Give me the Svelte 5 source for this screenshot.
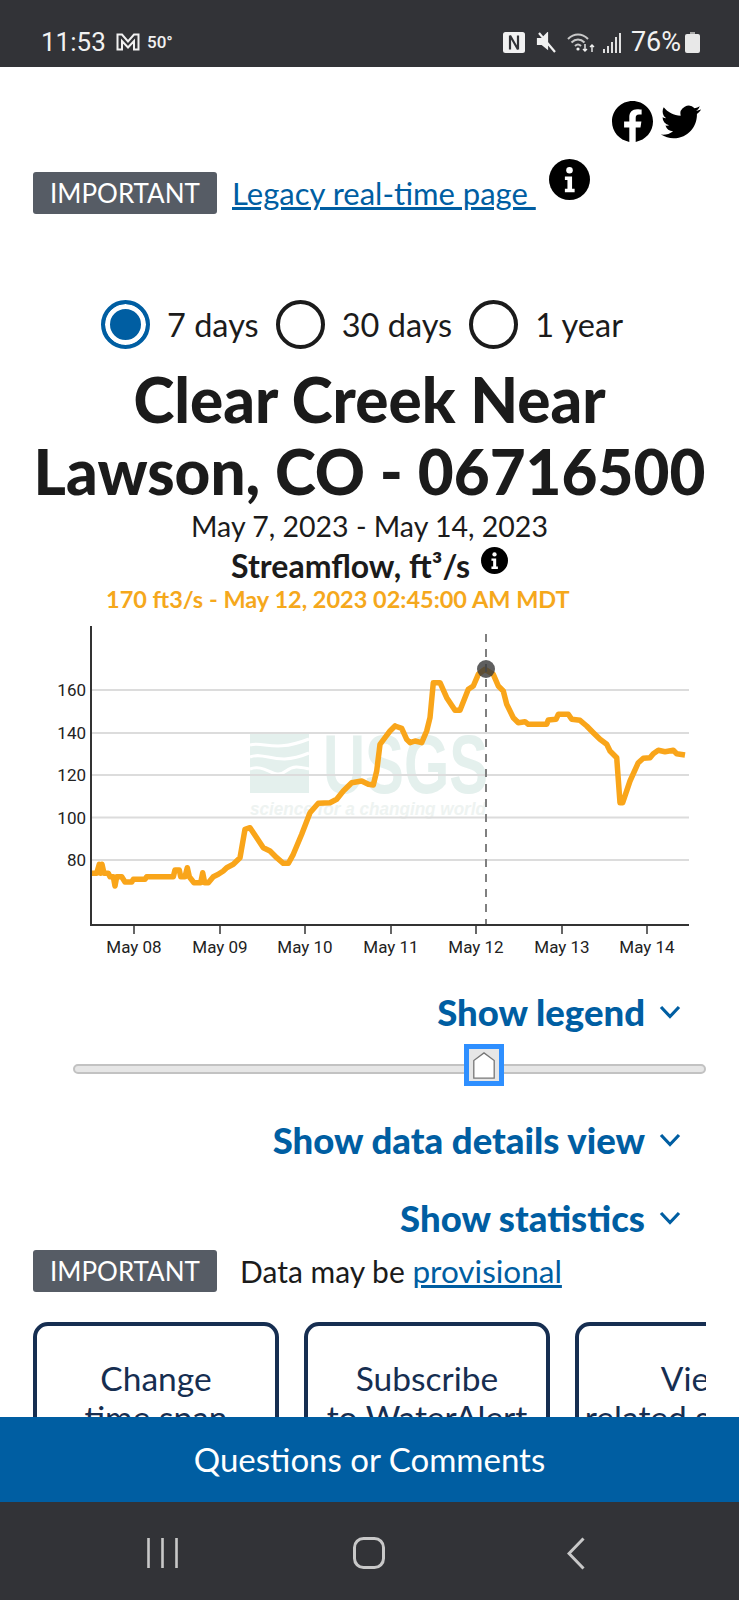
<script lang="ts">
  // traced from the plot: [x, y] in page pixels, left half then right half
  const rawLeft = [[93,787],[110,787],[118,760],[122,787],[126,760],[132,787],[145,787],[150,797],[160,797],[165,825],[170,797],[185,797],[195,813],[215,813],[220,805],[255,805],[260,797],[340,797],[345,777],[358,777],[362,797],[375,797],[382,770],[388,797],[402,815],[422,815],[428,785],[434,815],[445,815],[460,797],[475,790],[490,780],[500,770],[520,760],[540,740],[555,655],[570,650],[590,680],[610,710],[630,720],[650,740],[670,757],[685,757],[700,730],[725,670],[750,605],[775,577],[810,575],[830,565],[850,540],[875,515],[905,510],[925,520],[940,522],[950,480],[960,400],[975,380],[990,360],[1005,345]]
  const rawRight = [[0,360],[15,345],[35,352],[50,385],[60,395],[75,390],[95,395],[110,360],[120,320],[130,215],[150,215],[170,260],[195,298],[210,298],[235,235],[250,225],[265,190],[285,175],[310,190],[325,225],[340,240],[350,280],[370,320],[385,335],[405,332],[415,340],[470,340],[475,327],[498,325],[505,310],[535,310],[545,325],[570,328],[590,345],[610,365],[630,385],[650,400],[660,420],[680,440],[690,575],[698,575],[720,510],[745,455],[760,442],[780,440],[790,428],[805,418],[825,422],[850,418],[860,428],[885,432]]

  const top = 620
  const series = [
    ...rawLeft.map(([x, y]) => [60 + x / 3, 610 + y / 3 - top]),
    ...rawRight.map(([x, y]) => [390 + x / 3, 610 + y / 3 - top])
  ].map(p => p[0].toFixed(1) + ',' + p[1].toFixed(1)).join(' ')

  const yTicks = [[160, 689], [140, 732], [120, 774], [100, 816.5], [80, 859]]
  const xTicks = [['May 08', 134], ['May 09', 220], ['May 10', 305], ['May 11', 391], ['May 12', 476], ['May 13', 562], ['May 14', 647]]

  const ranges = [
    { label: '7 days', checked: true },
    { label: '30 days', checked: false },
    { label: '1 year', checked: false }
  ]
  const cards = [
    ['Change', 'time span'],
    ['Subscribe', 'to WaterAlert'],
    ['View', 'related stations']
  ]
</script>

{#snippet info(cls)}
  <svg class={cls} viewBox="0 0 40 40" aria-hidden="true">
    <circle cx="20" cy="20" r="20" fill="#000" />
    <circle cx="20" cy="11" r="3.2" fill="#fff" />
    <path d="M15.5 17h7v12h2.5v3.5H15.5V29H18v-8.500h-2.500z" fill="#fff" />
  </svg>
{/snippet}

{#snippet chevron()}
  <svg class="chev" viewBox="0 0 22 14" aria-hidden="true">
    <path d="M2 2l9 9.500L20 2" fill="none" stroke="#005ea2" stroke-width="3.200" />
  </svg>
{/snippet}

<div class="phone">
  <div class="status">
    <span class="time">11:53</span>
    <svg class="gmail" viewBox="0 0 24 18" aria-hidden="true">
      <path d="M1.500 16.500V1.500L6 1.500l6 7 6-7h4.500v15H18V8l-6 6.500L6 8v8.500z" fill="none" stroke="#f1f1f1" stroke-width="2" />
    </svg>
    <span class="temp">50°</span>
    <span class="grow"></span>
    <svg class="sicon nfc" viewBox="0 0 22 21" aria-hidden="true">
      <rect width="22" height="21" rx="2.500" fill="#f1f1f1" />
      <path d="M7 3.500v14M15 3.500v14M7 3.500l8 14" fill="none" stroke="#323337" stroke-width="2.200" />
    </svg>
    <svg class="sicon mute" viewBox="0 0 21 21" aria-hidden="true">
      <path d="M2 7h4l5-5v14l-5-4H2zM3 1l16 19" fill="#f1f1f1" stroke="#f1f1f1" stroke-width="2.200" />
    </svg>
    <svg class="sicon wifi" viewBox="0 0 29 21" aria-hidden="true">
      <path d="M1 7c6-6 14-6 20 0M4.500 10.500c4-4 9-4 13 0M8 14c2-2 4-2 6 0" fill="none" stroke="#c9c9c9" stroke-width="2" />
      <circle cx="11" cy="17" r="1.600" fill="#f1f1f1" />
      <path d="M18 12v7m-2-2l2 2 2-2M25 20v-7m-2 2l2-2 2 2" fill="none" stroke="#f1f1f1" stroke-width="1.400" />
    </svg>
    <svg class="sicon signal" viewBox="0 0 19 21" aria-hidden="true">
      <path d="M1 21v-4M5 21v-7M9 21v-11M13 21V5M17 21V1" stroke="#e0e0e0" stroke-width="2" />
    </svg>
    <span class="batt">76%</span>
    <svg class="sicon battery" viewBox="0 0 15 21" aria-hidden="true">
      <path d="M5 0h5v2H5z" fill="#a8a8a8" />
      <rect y="2" width="15" height="19" rx="2" fill="#e8e8e8" />
    </svg>
  </div>

  <main>
    <div class="social">
      <svg viewBox="0 0 24 24" class="fb" aria-label="Facebook">
        <path d="M24 12.073c0-6.627-5.373-12-12-12s-12 5.373-12 12c0 5.990 4.388 10.954 10.125 11.854v-8.385H7.078v-3.470h3.047V9.430c0-3.007 1.792-4.669 4.533-4.669 1.312 0 2.686.235 2.686.235v2.953H15.830c-1.491 0-1.956.925-1.956 1.874v2.250h3.328l-.532 3.470h-2.796v8.385C19.612 23.027 24 18.062 24 12.073z" />
      </svg>
      <svg viewBox="0 0 24 24" class="tw" aria-label="Twitter">
        <path d="M23.953 4.570a10 10 0 01-2.825.775 4.958 4.958 0 002.163-2.723c-.951.555-2.005.959-3.127 1.184a4.920 4.920 0 00-8.384 4.482C7.690 8.095 4.067 6.130 1.640 3.162a4.822 4.822 0 00-.666 2.475c0 1.710.870 3.213 2.188 4.096a4.904 4.904 0 01-2.228-.616v.060a4.923 4.923 0 003.946 4.827 4.996 4.996 0 01-2.212.085 4.936 4.936 0 004.604 3.417 9.867 9.867 0 01-6.102 2.105c-.390 0-.779-.023-1.170-.067a13.995 13.995 0 007.557 2.209c9.053 0 13.998-7.496 13.998-13.985 0-.210 0-.420-.015-.630A9.935 9.935 0 0024 4.590z" />
      </svg>
    </div>

    <div class="legacy">
      <span class="tag">IMPORTANT</span>
      <a href="#legacy" class="lnk">Legacy real-time page&nbsp;</a>
      {@render info('info-big')}
    </div>

    <div class="ranges">
      {#each ranges as r}
        <span class="radio" class:on={r.checked}></span>
        <span class="rlabel">{r.label}</span>
      {/each}
    </div>

    <h1>Clear Creek Near<br />Lawson, CO - 06716500</h1>
    <div class="dates">May 7, 2023 - May 14, 2023</div>
    <div class="param">Streamflow, ft³/s {@render info('info-small')}</div>
    <div class="hover">170 ft3/s - May 12, 2023 02:45:00 AM MDT</div>

    <svg class="chart" viewBox="0 0 739 345" aria-label="Streamflow chart">
      <g class="wm">
        <rect x="250" y="111" width="59" height="61" fill="#e4f0ed" />
        <path d="M250 124c14-4 24 8 59-6M250 136c16-6 26 10 59-4M250 148c16-6 24 12 36 2 8-6 14-4 23-2" fill="none" stroke="#fff" stroke-width="3" />
        <text x="323" y="172" font-size="84" textLength="165" lengthAdjust="spacingAndGlyphs" class="wm-big">USGS</text>
        <text x="250" y="194" font-size="18" textLength="236" lengthAdjust="spacingAndGlyphs" class="wm-small">science for a changing world</text>
      </g>
      {#each yTicks as [label, y]}
        <line x1="91" x2="689" y1={y - top} y2={y - top} stroke="#dcdcdc" stroke-width="2" />
        <text x="86" y={y - top + 6} text-anchor="end" class="tick">{label}</text>
      {/each}
      <polyline points={series} fill="none" stroke="#f9a51a" stroke-width="5.500" stroke-linejoin="round" />
      <line x1="486" x2="486" y1="13" y2="304" stroke="#808080" stroke-width="2" stroke-dasharray="8 7" />
      <circle cx="486" cy="48" r="9" fill="#3c3c3c" fill-opacity="0.82" />
      <path d="M91 5v299h598" fill="none" stroke="#333" stroke-width="2" />
      {#each xTicks as [label, x]}
        <line x1={x} x2={x} y1="304" y2="313" stroke="#333" stroke-width="1.500" />
        <text x={x} y="332" text-anchor="middle" class="tick">{label}</text>
      {/each}
    </svg>

    <div class="toggle first">Show legend {@render chevron()}</div>

    <div class="slider">
      <div class="track"></div>
      <div class="thumb">
        <svg viewBox="0 0 22 27" aria-hidden="true">
          <path d="M.8 26.200V8.500L11 .9l10.200 7.600v17.700z" fill="#fff" stroke="#777" stroke-width="1.300" />
        </svg>
      </div>
    </div>

    <div class="toggle second">Show data details view {@render chevron()}</div>
    <div class="toggle third">Show statistics {@render chevron()}</div>

    <div class="note">
      <span class="tag">IMPORTANT</span>
      <span class="note-text">Data may be <a href="#provisional" class="lnk">provisional</a></span>
    </div>

    <div class="cards">
      {#each cards as c}
        <div class="card">{c[0]}<br />{c[1]}</div>
      {/each}
    </div>
  </main>

  <div class="footer">Questions or Comments</div>

  <div class="nav">
    <svg class="nav-menu" viewBox="0 0 31 30" aria-hidden="true">
      <path d="M1.500 0v30M15.500 0v30M29.500 0v30" stroke="#c8c8c8" stroke-width="2.600" />
    </svg>
    <svg class="nav-home" viewBox="0 0 32 32" aria-hidden="true">
      <rect x="1.500" y="1.500" width="29" height="29" rx="9" fill="none" stroke="#c8c8c8" stroke-width="3" />
    </svg>
    <svg class="nav-back" viewBox="0 0 18 33" aria-hidden="true">
      <path d="M16.500 1.500L2 16.500l14.500 15" fill="none" stroke="#c8c8c8" stroke-width="3" />
    </svg>
  </div>
</div>

<style>
  :global(body) {
    margin: 0;
    background: #fff;
  }

  .phone {
    width: 739px;
    height: 1600px;
    overflow: hidden;
    display: flex;
    flex-direction: column;
    font-family: Lato, "Noto Sans", sans-serif;
    color: #1b1b1b;
  }

  .status {
    height: 67px;
    flex-shrink: 0;
    background: #323337;
    color: #f1f1f1;
    display: flex;
    align-items: center;
    padding: 17px 39px 0 41px;
    box-sizing: border-box;
    font-family: Roboto, sans-serif;
  }

  .time {
    font-size: 26px;
    width: 75px;
  }

  .gmail {
    width: 24px;
    height: 18px;
  }

  .temp {
    font-size: 17px;
    font-weight: 500;
    margin-left: 7px;
  }

  .grow {
    flex: 1;
  }

  .sicon {
    height: 21px;
    flex-shrink: 0;
  }

  .nfc { width: 22px; }
  .mute { width: 21px; margin-left: 11px; }
  .wifi { width: 29px; margin-left: 10px; }
  .signal { width: 19px; margin-left: 7px; }
  .battery { width: 15px; margin-left: 4px; }

  .batt {
    font-size: 27px;
    margin-left: 9px;
  }

  main {
    height: 1350px;
    flex-shrink: 0;
    overflow: hidden;
  }

  .social {
    display: flex;
    justify-content: flex-end;
    align-items: center;
    gap: 8px;
    padding: 34px 38px 0 0;
    height: 41px;
  }

  .fb { width: 41px; height: 41px; }
  .tw { width: 40px; height: 40px; }

  .legacy {
    display: flex;
    align-items: flex-start;
    margin-top: 17px;
    padding-left: 33px;
    height: 55px;
  }

  .tag {
    background: #565c65;
    color: #fff;
    border-radius: 3px;
    width: 184px;
    height: 42px;
    line-height: 42px;
    text-align: center;
    font-size: 26px;
    flex-shrink: 0;
  }

  .legacy .tag {
    margin-top: 13px;
  }

  .lnk {
    color: #005ea2;
  }

  .legacy .lnk {
    font-size: 31px;
    line-height: 42px;
    margin: 13px 13px 0 15px;
  }

  .info-big {
    width: 41px;
    height: 41px;
  }

  .ranges {
    display: flex;
    align-items: center;
    margin-top: 86px;
    padding-left: 101px;
    height: 49px;
  }

  .radio {
    width: 49px;
    height: 49px;
    box-sizing: border-box;
    border: 4px solid #1b1b1b;
    border-radius: 50%;
    background: #fff;
    flex-shrink: 0;
  }

  .radio.on {
    border-color: #005ea2;
    background: #005ea2;
    box-shadow: inset 0 0 0 5px #fff;
  }

  .rlabel {
    font-size: 32.500px;
    margin: 0 17px;
  }

  h1 {
    margin: 14px 0 0;
    font-size: 62px;
    line-height: 72px;
    font-weight: 900;
    text-align: center;
  }

  .dates {
    font-size: 28.500px;
    line-height: 38px;
    text-align: center;
  }

  .param {
    font-size: 32px;
    font-weight: 700;
    line-height: 41px;
    text-align: center;
  }

  .info-small {
    width: 27px;
    height: 27px;
    vertical-align: 4px;
    margin-left: 3px;
  }

  .hover {
    color: #f5a81c;
    font-size: 23.500px;
    font-weight: 700;
    line-height: 27px;
    padding-left: 106px;
  }

  .chart {
    display: block;
    width: 739px;
    height: 345px;
    margin-top: 8px;
  }

  .tick {
    font-family: Roboto, sans-serif;
    font-size: 17px;
    fill: #222;
  }

  .wm-big {
    font-family: "Liberation Sans", sans-serif;
    font-weight: 700;
    fill: #e4f0ed;
  }

  .wm-small {
    font-family: "Liberation Sans", sans-serif;
    font-weight: 700;
    font-style: italic;
    fill: #eef3f1;
  }

  .toggle {
    display: flex;
    justify-content: flex-end;
    align-items: center;
    gap: 14px;
    padding-right: 58px;
    color: #005ea2;
    font-size: 36.500px;
    font-weight: 900;
    line-height: 44px;
  }

  .toggle.first { margin-top: 24px; }
  .toggle.second { margin-top: 32px; }
  .toggle.third { margin-top: 34px; }

  .chev {
    width: 22px;
    height: 14px;
  }

  .slider {
    position: relative;
    margin: 10px 33px 0 73px;
    height: 42px;
  }

  .track {
    position: absolute;
    left: 0;
    right: 0;
    top: 20px;
    height: 10px;
    box-sizing: border-box;
    background: #e6e6e6;
    border: 2px solid #c2c2c2;
    border-radius: 5px;
  }

  .thumb {
    position: absolute;
    left: 391px;
    top: 0;
    width: 40px;
    height: 42px;
    box-sizing: border-box;
    border: 5px solid #2e8fff;
    background: #e6e6e6;
    display: flex;
    align-items: center;
    justify-content: center;
  }

  .thumb svg {
    width: 22px;
    height: 27px;
  }

  .note {
    display: flex;
    align-items: center;
    margin-top: 10px;
    padding-left: 33px;
  }

  .note-text {
    font-size: 30px;
    margin-left: 23px;
  }

  .note-text .lnk {
    font-size: 31.500px;
  }

  .cards {
    display: flex;
    gap: 25px;
    margin: 30px 33px 0;
    overflow: hidden;
  }

  .card {
    flex: 0 0 246px;
    box-sizing: border-box;
    height: 200px;
    border: 4px solid #162e51;
    border-radius: 15px;
    color: #162e51;
    text-align: center;
    font-size: 33.500px;
    line-height: 39px;
    padding-top: 33px;
  }

  .footer {
    height: 85px;
    flex-shrink: 0;
    background: #005ea2;
    color: #fff;
    font-size: 33px;
    line-height: 85px;
    text-align: center;
  }

  .nav {
    flex: 1;
    background: #323337;
    position: relative;
  }

  .nav-menu, .nav-home, .nav-back {
    position: absolute;
  }

  .nav-menu { left: 147px; top: 36px; width: 31px; height: 30px; }
  .nav-home { left: 353px; top: 35px; width: 32px; height: 32px; }
  .nav-back { left: 567px; top: 35px; width: 18px; height: 33px; }
</style>
